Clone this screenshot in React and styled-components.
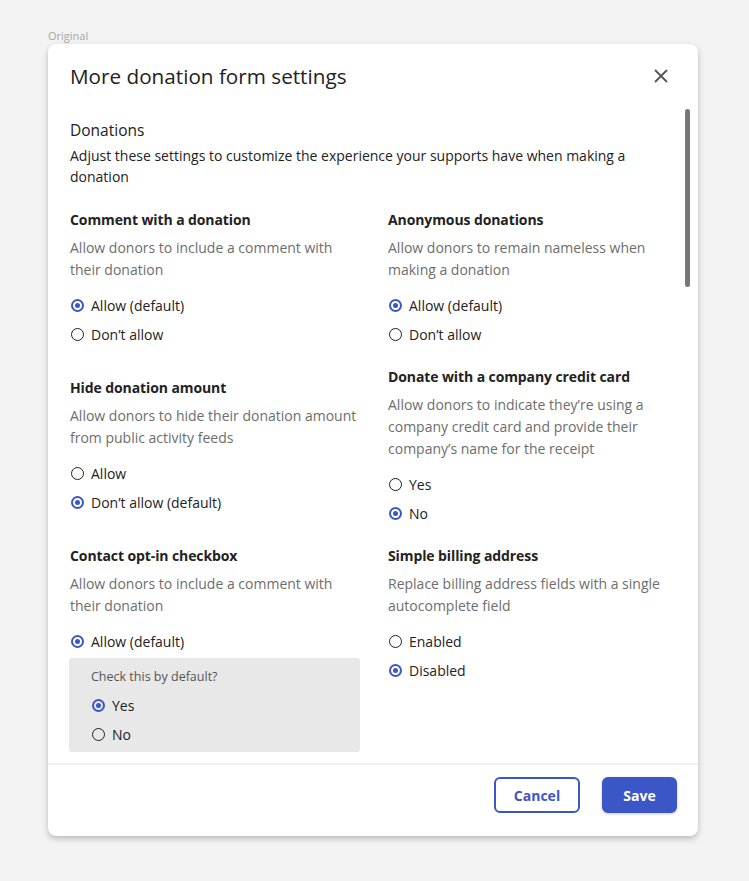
import React from "react";
import styled, { createGlobalStyle } from "styled-components";

const Global = createGlobalStyle`
  html, body { margin: 0; padding: 0; background: #f3f3f3; }
  body { font-family: "Open Sans", Lato, sans-serif; color: #222; }
`;

const Page = styled.div`
  width: 749px;
  height: 881px;
  padding: 28px 0 0 48px;
  box-sizing: border-box;
`;

const Caption = styled.div`
  font-size: 11px;
  line-height: 16px;
  color: #a6a6a6;
`;

const Dialog = styled.div`
  position: relative;
  width: 650px;
  height: 792px;
  background: #fff;
  border-radius: 8px;
  box-shadow: 0 3px 6px rgba(0, 0, 0, 0.22), 0 0 2px rgba(0, 0, 0, 0.06);
  display: flex;
  flex-direction: column;
  overflow: hidden;
`;

const Header = styled.div`
  display: flex;
  align-items: center;
  justify-content: space-between;
  padding: 18px 29px 0 22px;
  height: 28px;
`;

const Title = styled.h2`
  margin: 0;
  font-size: 20.7px;
  line-height: 28px;
  font-weight: 400;
  color: #222;
`;

const Close = styled.button`
  border: 0;
  background: none;
  padding: 0;
  width: 16px;
  height: 16px;
  display: flex;
  align-items: center;
  justify-content: center;
  cursor: pointer;
`;

const Body = styled.div`
  position: relative;
  height: 673px;
  overflow: hidden;
  padding: 29px 22px 0 22px;
  box-sizing: border-box;
`;

const Thumb = styled.div`
  position: absolute;
  top: 19px;
  right: 8px;
  width: 5px;
  height: 178px;
  border-radius: 3px;
  background: #777;
`;

const SectionTitle = styled.h3`
  margin: 0;
  font-size: 15.5px;
  line-height: 22px;
  font-weight: 400;
  color: #222;
`;

const Intro = styled.p`
  margin: 4px 0 0;
  font-size: 14px;
  line-height: 21px;
  color: #222;
  max-width: 580px;
`;

const Grid = styled.div`
  display: grid;
  grid-template-columns: 290px 290px;
  column-gap: 28px;
  row-gap: 18px;
  margin-top: 23px;
`;

const Setting = styled.div`
  display: flex;
  flex-direction: column;
  align-self: ${(p) => (p.$center ? "center" : "start")};
`;

const Label = styled.div`
  font-size: 14px;
  line-height: 20px;
  font-weight: 700;
  letter-spacing: -0.1px;
  color: #222;
`;

const Help = styled.div`
  margin-top: 7px;
  font-size: 14px;
  line-height: 22px;
  color: #6d6d6d;
`;

const Options = styled.div`
  margin-top: 10px;
  display: flex;
  flex-direction: column;
`;

const Option = styled.label`
  display: flex;
  align-items: center;
  gap: 7px;
  height: 29px;
  font-size: 14px;
  color: #222;
`;

const Circle = styled.span`
  box-sizing: border-box;
  width: 13px;
  height: 13px;
  margin-left: 1px;
  border-radius: 50%;
  border: ${(p) => (p.$on ? "2px solid #3b56c6" : "1.6px solid #1e1e1e")};
  display: flex;
  align-items: center;
  justify-content: center;
  &::after {
    content: "";
    display: ${(p) => (p.$on ? "block" : "none")};
    width: 5px;
    height: 5px;
    border-radius: 50%;
    background: #3b56c6;
  }
`;

const SubBox = styled.div`
  margin: 2px 0 0 -1px;
  background: #e8e8e8;
  border-radius: 3px;
  padding: 10px 22px 3px 22px;
`;

const SubLabel = styled.div`
  font-size: 12.5px;
  line-height: 18px;
  color: #555;
  margin-bottom: 5px;
`;

const Footer = styled.div`
  border-top: 2px solid #efefef;
  display: flex;
  justify-content: flex-end;
  gap: 22px;
  padding: 12px 21px 23px;
`;

const Button = styled.button`
  height: 36px;
  box-sizing: border-box;
  border-radius: 6px;
  font-family: inherit;
  font-size: 14px;
  font-weight: 700;
  cursor: pointer;
  width: ${(p) => p.$w}px;
  border: 2px solid #3b56c6;
  color: ${(p) => (p.$primary ? "#fff" : "#3b56c6")};
  background: ${(p) => (p.$primary ? "#3b56c6" : "#fff")};
  box-shadow: ${(p) => (p.$primary ? "0 1px 3px rgba(0,0,0,0.2)" : "none")};
`;

const Radio = ({ on, children }) => (
  <Option>
    <Circle $on={on} />
    {children}
  </Option>
);

const settings = [
  {
    label: "Comment with a donation",
    help: "Allow donors to include a comment with their donation",
    options: ["Allow (default)", "Don’t allow"],
    selected: 0,
  },
  {
    label: "Anonymous donations",
    help: "Allow donors to remain nameless when making a donation",
    options: ["Allow (default)", "Don’t allow"],
    selected: 0,
  },
  {
    label: "Hide donation amount",
    help: "Allow donors to hide their donation amount from public activity feeds",
    options: ["Allow", "Don’t allow (default)"],
    selected: 1,
    center: true,
  },
  {
    label: "Donate with a company credit card",
    help: "Allow donors to indicate they’re using a company credit card and provide their company’s name for the receipt",
    options: ["Yes", "No"],
    selected: 1,
  },
  {
    label: "Contact opt-in checkbox",
    help: "Allow donors to include a comment with their donation",
    options: ["Allow (default)"],
    selected: 0,
    sub: true,
  },
  {
    label: "Simple billing address",
    help: "Replace billing address fields with a single autocomplete field",
    options: ["Enabled", "Disabled"],
    selected: 1,
  },
];

export default function App() {
  return (
    <>
      <Global />
      <Page>
        <Caption>Original</Caption>
        <Dialog>
          <Header>
            <Title>More donation form settings</Title>
            <Close aria-label="Close">
              <svg width="14" height="14" viewBox="0 0 14 14">
                <path d="M1.5 1.5 L12.5 12.5 M12.5 1.5 L1.5 12.5" stroke="#555" strokeWidth="1.8" strokeLinecap="round" />
              </svg>
            </Close>
          </Header>
          <Body>
            <Thumb />
            <SectionTitle>Donations</SectionTitle>
            <Intro>
              Adjust these settings to customize the experience your supports have when making a donation
            </Intro>
            <Grid>
              {settings.map((s) => (
                <Setting key={s.label} $center={s.center}>
                  <Label>{s.label}</Label>
                  <Help>{s.help}</Help>
                  <Options>
                    {s.options.map((o, i) => (
                      <Radio key={o} on={i === s.selected}>
                        {o}
                      </Radio>
                    ))}
                  </Options>
                  {s.sub && (
                    <SubBox>
                      <SubLabel>Check this by default?</SubLabel>
                      <Radio on>Yes</Radio>
                      <Radio on={false}>No</Radio>
                    </SubBox>
                  )}
                </Setting>
              ))}
            </Grid>
          </Body>
          <Footer>
            <Button $w={86}>Cancel</Button>
            <Button $w={75} $primary>Save</Button>
          </Footer>
        </Dialog>
      </Page>
    </>
  );
}
